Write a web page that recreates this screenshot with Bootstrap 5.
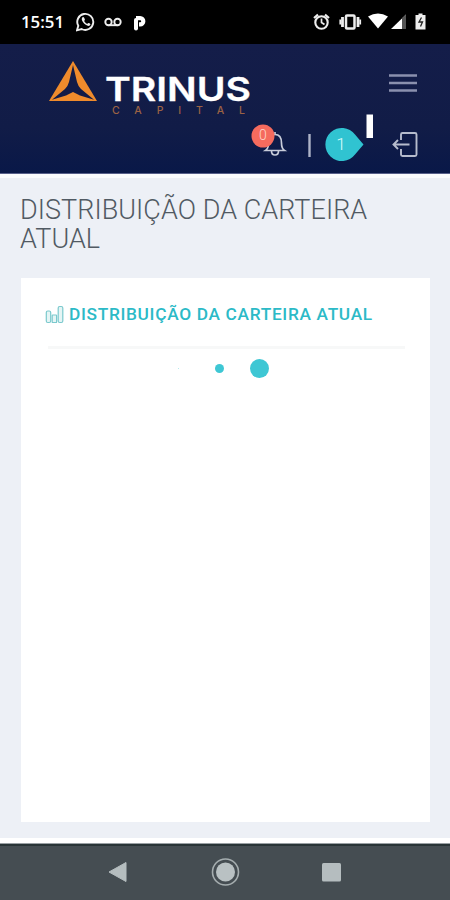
<!DOCTYPE html>
<html lang="pt-BR">
<head>
<meta charset="utf-8">
<meta name="viewport" content="width=device-width, initial-scale=1">
<title>Trinus Capital</title>
<link href="https://cdn.jsdelivr.net/npm/bootstrap@5.3.0/dist/css/bootstrap.min.css" rel="stylesheet">
<style>
body{font-family:Roboto,"Open Sans",sans-serif;background:#edf0f6;height:900px;overflow:hidden}
svg{display:block;flex:none}
.status{height:44px;background:#000;color:#fff;padding:0 23px 0 21px}
.clock{font-size:16.8px;font-weight:600;width:55px;line-height:44px;font-family:"Open Sans",sans-serif}
.top{height:130px;background:linear-gradient(#141d49,#111c47 65%,#091848);border-bottom:1px solid #58608a}
.brand-row{height:69px;padding:14px 33px 0 49px}
.tools{height:58px;padding-right:32px}
.edge{height:4px;background:#fafbfd}
.title{font-size:27px;line-height:28.5px;font-weight:300;color:#515a63;margin:0;padding:18px 20px 0;height:100px;letter-spacing:.05px;white-space:nowrap}
.panel{margin:0 20px 0 21px;height:544px;background:#fff;padding:26px 25px 0 24px}
.panel-title{font-size:17.3px;line-height:20px;font-weight:500;color:#2cbac7;letter-spacing:.68px;margin:0;white-space:nowrap}
.rule{height:3px;background:#f7f8f8;margin:22px 0 0 3px}
.loader{height:38px;gap:32px;padding-left:109px}
.dot{border-radius:50%;background:#3ec7d4}
.dot-a{width:1px;height:1px;opacity:.5}
.dot-b{width:9px;height:9px;margin-left:4px}
.dot-c{width:19px;height:19px;margin-left:-6px}
.foot{height:56px;background:#454d52;border-top:2px solid #293437}
.foot-edge{height:6px;background:#fff;border-bottom:1px solid #9aa0a4}
</style>
<script src="https://cdn.jsdelivr.net/npm/bootstrap@5.3.0/dist/js/bootstrap.bundle.min.js"></script>
</head>
<body class="d-flex flex-column m-0">
<div class="status d-flex align-items-center">
  <span class="clock">15:51</span>
  <svg width="72" height="20" viewBox="0 0 72 20" fill="none" stroke="#eee">
    <path d="M1 18.300l1.300-4.500A8 8 0 1 1 5.600 17z" stroke-width="1.900"/>
    <path d="M6.500 5.200c-1.200 1-.9 3 .6 5.100 1.900 2.700 4.800 4.300 6.600 3.300 1.400-.9.700-1.900-.8-2.500-1-.4-1.200.9-2 .7-1.200-.5-2.300-1.600-2.700-2.700.2-.7 1-.9.600-1.800-.4-1.300-1-2.800-2.300-2.100z" fill="#eee" stroke="none"/>
    <circle cx="32.500" cy="10" r="3.200" stroke-width="1.900"/><circle cx="41.500" cy="10" r="3.200" stroke-width="1.900"/><path d="M32.500 13.200h9" stroke-width="1.900"/>
    <path d="M60 16.500V8" stroke="#fff" stroke-width="4" stroke-linecap="round"/><path d="M60 6.200h4.200a3.100 3.100 0 0 1 0 6.200H63" stroke="#fff" stroke-width="4.200"/>
  </svg>
  <svg class="ms-auto" width="114" height="18" viewBox="313 14 114 18" fill="none" stroke="#eee">
    <circle cx="321.500" cy="23.500" r="6.200" stroke-width="2.100"/><path d="M321.500 19.500v4l3 2" stroke-width="1.700"/><path d="M314 19l4-3.400M329 19l-4-3.400" stroke-width="2.200"/>
    <rect x="346" y="16.500" width="8.500" height="13" rx="1" stroke-width="2.500"/><path d="M342.500 18v10M358 18v10" stroke-width="2.800"/><path d="M340.300 20.500v5M360.200 20.500v5" stroke-width="1.800"/>
    <path d="M368 17.500q10-6 20 0l-10 12z" fill="#fff" stroke="none"/>
    <path d="M391 30l15-14.500V30z" fill="#fff" stroke="none"/><path d="M402 19.300l4-3.800V30h-4z" fill="#555" stroke="none"/>
    <path d="M415.500 16h3v-1.500h4V16h3v14.500h-10z" fill="#eee" stroke="none"/><path d="M421.500 18.500l-2.500 4.500h3.500l-2 4.500" stroke="#222" stroke-width="1.300"/>
  </svg>
</div>
<header class="top">
  <div class="brand-row d-flex justify-content-between align-items-start">
    <svg width="206" height="57" viewBox="49 58 206 57">
      <path d="M73 61L49 101h48z" fill="#ef8b2c"/>
      <path d="M73 65L69 82q-1 4-4 7L52 99.800 66 95.500l7-3.500 7 3.500 14 4.300L81 89q-3-3-4-7z" fill="#121b47"/>
      <text x="105" y="101" textLength="146" lengthAdjust="spacingAndGlyphs" font-family="Inter, Roboto, sans-serif" font-weight="600" font-size="33" fill="#fff" stroke="#fff" stroke-width=".3">TRINUS</text>
      <text x="112" y="113.500" textLength="133" font-family="Inter, Roboto, sans-serif" font-weight="500" font-size="10.500" fill="#9b6244">CAPITAL</text>
    </svg>
    <svg class="mt-3" width="28" height="20" viewBox="0 0 28 20"><path d="M0 1.500h28M0 9h28M0 16.500h28" stroke="#8a90ae" stroke-width="2.400"/></svg>
  </div>
  <div class="tools d-flex justify-content-end">
    <svg width="168" height="52" viewBox="250 113 168 52" fill="none">
      <path d="M265.500 150.500q3-2 3-7.500c0-6 2.500-8.500 6.500-8.500s6.500 2.500 6.500 8.500q0 5.500 3 7.500zM271.500 151q0 4 3.500 4t3.500-4M275 134v-2" stroke="#c8ccda" stroke-width="1.700"/>
      <circle cx="263" cy="136" r="11.500" fill="#f56b5e"/>
      <text x="263" y="140" text-anchor="middle" font-family="Roboto, sans-serif" font-weight="300" font-size="14" fill="#ffd5ca">0</text>
      <path d="M309.500 134v23" stroke="#aeb3c8" stroke-width="2.400"/>
      <path d="M363.500 144.500L355 154.500A16.500 16.500 0 1 1 355 134.500z" fill="#30c3d1"/>
      <text x="341" y="149.500" text-anchor="middle" font-family="Roboto, sans-serif" font-weight="300" font-size="17" fill="#d6fbfa">1</text>
      <path d="M366.500 114.500h6.500v23.500h-6.500z" fill="#fff"/>
      <path d="M401 140v-5.500q0-1.500 1.500-1.500H415q1.500 0 1.500 1.500v20q0 1.500-1.500 1.500h-12.500q-1.500 0-1.500-1.500V149M409.500 144.500H394M398 140l-4.500 4.500 4.500 4.500" stroke="#b6bccd" stroke-width="1.900"/>
    </svg>
  </div>
</header>
<div class="edge"></div>
<main>
  <h1 class="title">DISTRIBUIÇÃO DA CARTEIRA<br>ATUAL</h1>
  <section class="panel">
    <div class="d-flex align-items-center">
      <svg width="24" height="20" viewBox="0 0 24 20" fill="#e5f5f5" stroke="#7bc9cd" stroke-width="1.200"><rect x="1.300" y="7" width="4.400" height="11.500" rx="1.500"/><rect x="7.200" y="11" width="4.400" height="7.500" rx=".6"/><rect x="13.200" y="2.500" width="4.600" height="16" rx="1.500"/></svg>
      <h2 class="panel-title">DISTRIBUIÇÃO DA CARTEIRA ATUAL</h2>
    </div>
    <div class="rule"></div>
    <div class="loader d-flex align-items-center">
      <span class="dot dot-a ms-4"></span><span class="dot dot-b"></span><span class="dot dot-c"></span>
    </div>
  </section>
</main>
<div class="mt-auto">
  <div class="foot-edge"></div>
  <footer class="foot">
    <svg width="450" height="54" viewBox="0 846 450 54">
      <path d="M109 872l17-9.500v19z" fill="#b5bdbf" stroke="#b5bdbf" stroke-linejoin="round"/>
      <circle cx="225.500" cy="872" r="13" fill="none" stroke="#a5adaf" stroke-width="1.600"/><circle cx="225.500" cy="872" r="9.500" fill="#b9c1c3"/>
      <rect x="322" y="863" width="19" height="18.500" rx="1.500" fill="#b5bdbf"/>
    </svg>
  </footer>
</div>
</body>
</html>
